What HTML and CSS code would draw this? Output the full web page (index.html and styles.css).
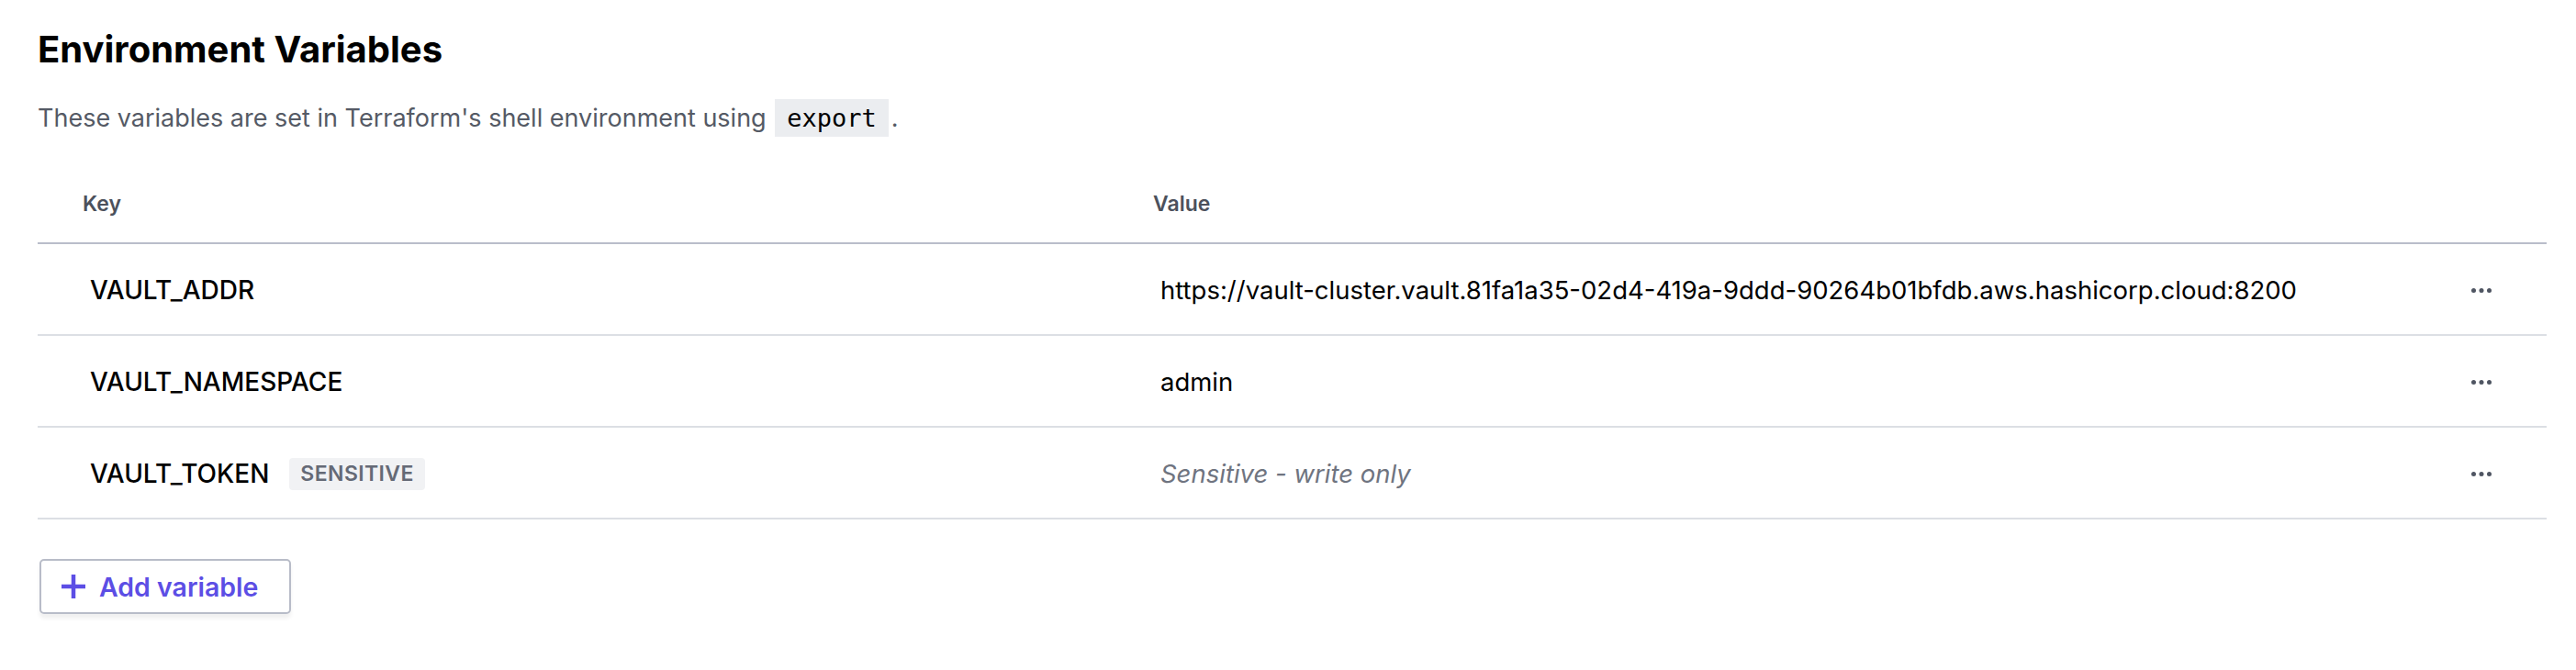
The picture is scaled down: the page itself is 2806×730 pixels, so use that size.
FILE: index.html
```html
<!DOCTYPE html>
<html lang="en">
<head>
<meta charset="utf-8">
<title>Environment Variables</title>
<link rel="stylesheet" href="styles.css">
</head>
<body>
<div class="page">
  <h2 class="title">Environment Variables</h2>
  <p class="desc">These variables are set in Terraform's shell environment using <code class="code">export</code>.</p>
  <div class="table">
    <div class="row head">
      <div class="cell">Key</div>
      <div class="cell">Value</div>
      <div class="cell"></div>
    </div>
    <div class="row">
      <div class="cell key">VAULT_ADDR</div>
      <div class="cell val">https://vault-cluster.vault.81fa1a35-02d4-419a-9ddd-90264b01bfdb.aws.hashicorp.cloud:8200</div>
      <div class="cell act"><svg class="dots" viewBox="0 0 22 5" width="22" height="5"><circle cx="2.5" cy="2.5" r="2.5"/><circle cx="11" cy="2.5" r="2.5"/><circle cx="19.5" cy="2.5" r="2.5"/></svg></div>
    </div>
    <div class="row">
      <div class="cell key">VAULT_NAMESPACE</div>
      <div class="cell val">admin</div>
      <div class="cell act"><svg class="dots" viewBox="0 0 22 5" width="22" height="5"><circle cx="2.5" cy="2.5" r="2.5"/><circle cx="11" cy="2.5" r="2.5"/><circle cx="19.5" cy="2.5" r="2.5"/></svg></div>
    </div>
    <div class="row">
      <div class="cell key">VAULT_TOKEN <span class="badge">SENSITIVE</span></div>
      <div class="cell val muted">Sensitive - write only</div>
      <div class="cell act"><svg class="dots" viewBox="0 0 22 5" width="22" height="5"><circle cx="2.5" cy="2.5" r="2.5"/><circle cx="11" cy="2.5" r="2.5"/><circle cx="19.5" cy="2.5" r="2.5"/></svg></div>
    </div>
  </div>
  <button class="add" type="button"><svg class="plus" viewBox="0 0 28 28" width="28" height="28"><path d="M14 1v26M1 14h26"/></svg><span>Add variable</span></button>
</div>
</body>
</html>
```
FILE: styles.css
```css
* { box-sizing: border-box; }
body {
  margin: 0;
  background: #fff;
  font-family: Inter, "Noto Sans", sans-serif;
  color: #000;
}
.page {
  padding: 30px 32px 40px 41px;
}
.title {
  margin: 0;
  font-size: 40px;
  line-height: 48px;
  font-weight: 700;
  color: #000;
}
.desc {
  margin: 33px 0 0;
  font-size: 27px;
  line-height: 36px;
  color: #555a65;
}
.code {
  font-family: "DejaVu Sans Mono", "Liberation Mono", monospace;
  font-size: 27px;
  color: #000;
  background: #ebedf0;
  padding: 5px 13px;
  margin-left: 2px;
  margin-right: 3px;
}
.table {
  margin-top: 33px;
}
.row {
  display: grid;
  grid-template-columns: 1166px 1fr 142px;
  align-items: center;
  height: 100px;
  border-bottom: 2px solid #dcdfe4;
}
.row.head {
  height: 86px;
  border-bottom-color: #b9bdca;
}
.cell {
  padding-left: 57px;
  padding-top: 2px;
  display: flex;
  align-items: center;
}
.head .cell {
  padding-left: 49px;
  padding-top: 0;
  font-size: 23px;
  font-weight: 600;
  color: #4c515c;
}
.key {
  font-size: 28px;
  font-weight: 500;
  color: #000;
}
.val {
  font-size: 27.5px;
  font-weight: 400;
  color: #000;
  white-space: nowrap;
}
.muted {
  font-style: italic;
  color: #6f7480;
}
.badge {
  margin-left: 22px;
  height: 35px;
  padding: 0 12px;
  display: inline-flex;
  align-items: center;
  background: #f1f2f4;
  border-radius: 4px;
  font-size: 23px;
  font-weight: 600;
  letter-spacing: 0.4px;
  color: #656a76;
}
.act {
  padding-left: 0;
  justify-content: center;
}
.dots { fill: #4f5562; display: block; }
.add {
  margin-top: 43px;
  margin-left: 2px;
  display: inline-flex;
  align-items: center;
  height: 60px;
  width: 274px;
  padding: 0 0 0 21px;
  background: #fff;
  border: 2px solid #b8bcc8;
  border-radius: 5px;
  box-shadow: 0 5px 4px rgba(0, 0, 0, 0.06);
  font-family: Inter, "Noto Sans", sans-serif;
  font-size: 28.5px;
  font-weight: 600;
  color: #5c4ee5;
  cursor: pointer;
}
.plus {
  display: block;
  stroke: #5c4ee5;
  stroke-width: 4.5;
  fill: none;
  margin-right: 14px;
}
```
